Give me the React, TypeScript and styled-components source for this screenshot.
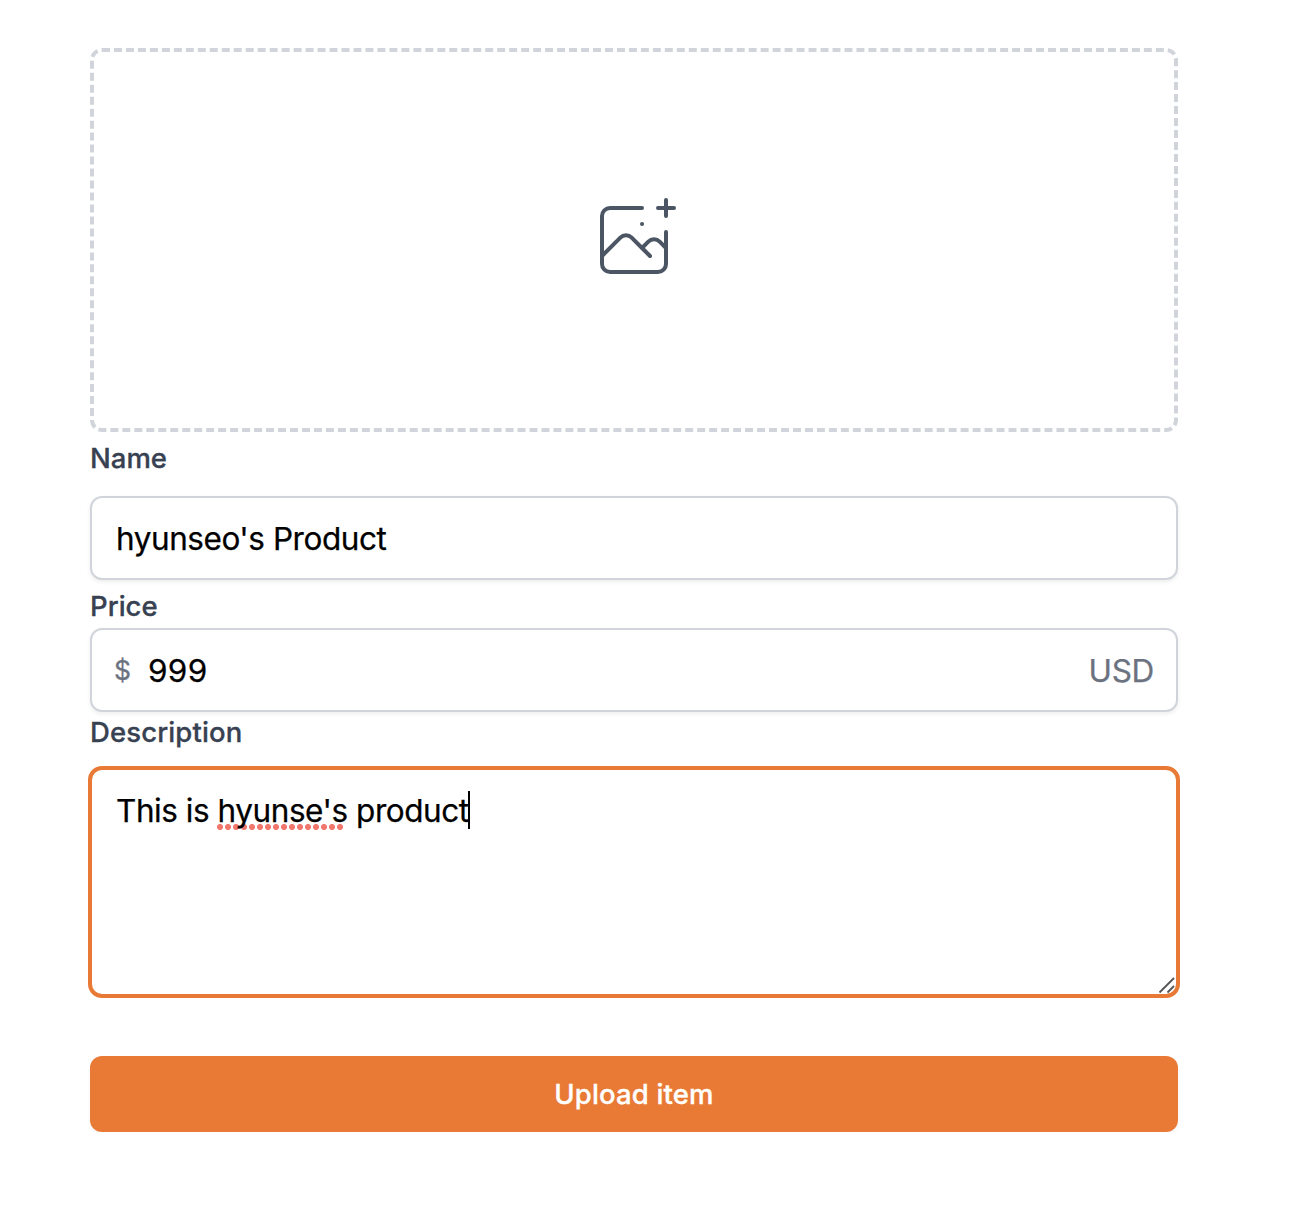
import React from "react";
import styled, { createGlobalStyle } from "styled-components";

const GlobalStyle = createGlobalStyle`
  *, *::before, *::after { box-sizing: border-box; }
  body {
    margin: 0;
    background: #fff;
    font-family: Inter, "Liberation Sans", sans-serif;
    color: #000;
  }
`;

const Form = styled.form`
  display: flex;
  flex-direction: column;
  width: 1088px;
  margin: 48px 0 0 90px;
`;

const Dropzone = styled.div`
  display: flex;
  align-items: center;
  justify-content: center;
  height: 384px;
  border: 4px dashed #d1d5db;
  border-radius: 12px;
  color: #4b5563;
`;

const Label = styled.label<{ $top: number; $bottom: number; $spacing: number }>`
  margin: ${(p) => p.$top}px 0 ${(p) => p.$bottom}px;
  font-size: 27.5px;
  line-height: 40px;
  font-weight: 500;
  letter-spacing: ${(p) => p.$spacing}px;
  color: #374151;
  -webkit-text-stroke: 0.3px currentColor;
`;

const Field = styled.div`
  display: flex;
  align-items: center;
  height: 84px;
  padding: 0 22px 0 24px;
  border: 2px solid #d1d5db;
  border-radius: 12px;
  background: #fff;
  box-shadow: 0 2px 4px rgba(0, 0, 0, 0.07);
`;

const Input = styled.input<{ $spacing: number }>`
  flex: 1;
  min-width: 0;
  height: 48px;
  padding: 0;
  border: 0;
  outline: 0;
  background: transparent;
  color: #000;
  font: 400 31.5px Inter, "Liberation Sans", sans-serif;
  letter-spacing: ${(p) => p.$spacing}px;
  -webkit-text-stroke: 0.25px currentColor;
`;

const Currency = styled.span`
  width: 34px;
  margin-left: -2px;
  font-size: 26.5px;
  color: #6b7280;
  -webkit-text-stroke: 0.25px currentColor;
`;

const Unit = styled.span`
  font-size: 31.5px;
  letter-spacing: -0.3px;
  color: #6b7280;
  -webkit-text-stroke: 0.25px currentColor;
`;

const Editor = styled.div`
  position: relative;
  height: 232px;
  margin: 0 -2px;
  padding: 17px 24px;
  border: 4px solid #e87a35;
  border-radius: 14px;
  font-size: 31.5px;
  line-height: 48px;
  letter-spacing: -0.45px;
  white-space: pre;
  -webkit-text-stroke: 0.25px currentColor;
`;

const Misspelled = styled.span`
  position: relative;
`;

const Dots = styled.span`
  position: absolute;
  left: -1px;
  width: 127px;
  bottom: 0;
  height: 6px;
  background: radial-gradient(circle at 3px 3px, #f2776c 2.7px, transparent 3.3px) 0 0 / 8px 6px repeat-x;
  z-index: -1;
`;

const Caret = styled.span`
  display: inline-block;
  width: 2px;
  height: 38px;
  margin-left: -1px;
  vertical-align: -7px;
  background: #000;
`;

const Resizer = styled.svg`
  position: absolute;
  right: 0;
  bottom: 0;
`;

const Submit = styled.button`
  height: 76px;
  margin-top: 58px;
  padding: 0;
  border: 0;
  border-radius: 12px;
  background: #e87a35;
  box-shadow: 0 2px 4px rgba(0, 0, 0, 0.05);
  color: #fff;
  font: 500 27.5px Inter, "Liberation Sans", sans-serif;
  letter-spacing: 0.15px;
  -webkit-text-stroke: 0.35px currentColor;
`;

export default function App() {
  return (
    <>
      <GlobalStyle />
      <Form>
        <Dropzone>
          <svg width="96" height="96" viewBox="0 0 48 48" fill="none" stroke="currentColor" strokeWidth="2" strokeLinecap="round" strokeLinejoin="round">
            <path d="M28 8H12a4 4 0 00-4 4v20m32-12v8m0 0v8a4 4 0 01-4 4H12a4 4 0 01-4-4v-4m32-4l-3.172-3.172a4 4 0 00-5.656 0L28 28M8 32l9.172-9.172a4 4 0 015.656 0L28 28m0 0l4 4m4-24h8m-4-4v8m-12 4h.02" />
          </svg>
        </Dropzone>
        <Label $top={6} $bottom={18} $spacing={0}>Name</Label>
        <Field>
          <Input type="text" defaultValue="hyunseo's Product" $spacing={-0.45} />
        </Field>
        <Label $top={6} $bottom={2} $spacing={0}>Price</Label>
        <Field>
          <Currency>$</Currency>
          <Input type="text" defaultValue="999" $spacing={0.3} />
          <Unit>USD</Unit>
        </Field>
        <Label $top={0} $bottom={14} $spacing={0.12}>Description</Label>
        <Editor>
          This is <Misspelled>hyunse's<Dots /></Misspelled> product<Caret />
          <Resizer width="18" height="18" viewBox="0 0 18 18" stroke="#555" strokeWidth="1.8">
            <path d="M1.500 16.500L16 2M9.500 16.500L16 10" />
          </Resizer>
        </Editor>
        <Submit type="button">Upload item</Submit>
      </Form>
    </>
  );
}
